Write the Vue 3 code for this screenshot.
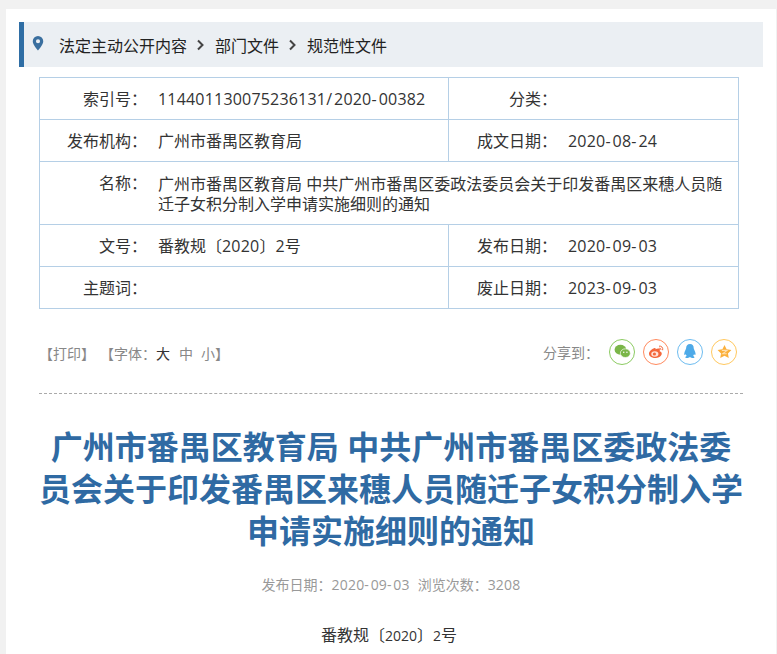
<script setup>
const C = '\uFF1A'
const rows = [
  { cells: [['索引号' + C, '114401130075236131/2020-00382'], ['分类' + C, '']] },
  { cells: [['发布机构' + C, '广州市番禺区教育局'], ['成文日期' + C, '2020-08-24']] },
  { wide: true, cells: [['名称' + C, '广州市番禺区教育局 中共广州市番禺区委政法委员会关于印发番禺区来穗人员随迁子女积分制入学申请实施细则的通知']] },
  { cells: [['文号' + C, '番教规〔2020〕2号'], ['发布日期' + C, '2020-09-03']] },
  { cells: [['主题词' + C, ''], ['废止日期' + C, '2023-09-03']] },
]

// Digits and separators are tracked separately so numbers take up the reference's width.
function parts(text) {
  return text.split(/(\d+|[-/])/).filter(Boolean).map((t) => ({
    t,
    cls: /^\d/.test(t) ? 'dg' : /^[-/]/.test(t) ? 'sep' : '',
  }))
}
</script>

<template>
  <div class="page">
    <div class="crumb">
      <svg class="pin" width="12" height="15" viewBox="0 0 12 16"><path fill="#3a6f9f" fill-rule="evenodd" d="M6 0a5.600 5.600 0 0 0-5.600 5.600C.4 9.400 6 15.500 6 15.500s5.600-6.100 5.600-9.900A5.600 5.600 0 0 0 6 0Zm0 7.800a2.200 2.200 0 1 1 0-4.400 2.200 2.200 0 0 1 0 4.400Z"/></svg>
      <span>法定主动公开内容</span>
      <svg class="chev" width="8" height="12" viewBox="0 0 8 12"><path d="M1 1.500 5.500 6 1 10.500" fill="none" stroke="#444" stroke-width="2"/></svg>
      <span>部门文件</span>
      <svg class="chev" width="8" height="12" viewBox="0 0 8 12"><path d="M1 1.500 5.500 6 1 10.500" fill="none" stroke="#444" stroke-width="2"/></svg>
      <span>规范性文件</span>
    </div>

    <div class="meta">
      <div v-for="(row, i) in rows" :key="i" class="row" :class="{ wide: row.wide }">
        <div v-for="(c, j) in row.cells" :key="j" class="cell" :class="j === 0 ? 'first' : 'second'">
          <div class="label">{{ c[0] }}</div>
          <div class="value"><span v-for="(p, k) in parts(c[1])" :key="k" :class="p.cls">{{ p.t }}</span></div>
        </div>
      </div>
    </div>

    <div class="tools">
      <div class="left">
        <span>【打印】</span>
        <span class="font">【字体{{ C }}<b>大</b><i>中</i><i>小</i>】</span>
      </div>
      <div class="share">
        <span class="share-label">分享到{{ C }}</span>
        <span class="ic wx">
          <svg width="17" height="15" viewBox="0 0 20 18"><ellipse cx="7.500" cy="6.800" rx="7" ry="6" fill="#7ab648"/><ellipse cx="13.400" cy="11" rx="6" ry="5.200" fill="#7ab648" stroke="#fff" stroke-width=".8"/><circle cx="11.500" cy="10" r=".9" fill="#fff"/><circle cx="15.300" cy="10" r=".9" fill="#fff"/></svg>
        </span>
        <span class="ic wb">
          <svg width="17" height="15" viewBox="0 0 20 18"><path fill="#f4673c" d="M8.500 4.500C4.500 5.500.8 9 1 12c.3 3.300 4.300 5 8.300 4.700 4-.3 7.200-2.700 7-5.400-.1-1.400-1.500-2.200-2.600-2.500.8-1.500.5-2.800-.6-3.300-1.200-.5-3 .1-4.300.9.300-1.300-.1-2.200-1.300-1.900Z"/><ellipse cx="8" cy="12" rx="4.300" ry="3.200" fill="#ffe3da"/><circle cx="7.500" cy="12" r="1.900" fill="#f4673c"/><path d="M13.500 2.500c2.500-.3 4.500 1.700 4 4.500M13.800 5c1-.1 1.700.7 1.500 1.700" fill="none" stroke="#f4673c" stroke-width="1.200" stroke-linecap="round"/></svg>
        </span>
        <span class="ic qq">
          <svg width="12" height="15" viewBox="0 0 12 15"><path fill="#4eaae8" d="M6 0C3.400 0 2.200 1.900 2.100 4.200 1.900 5.500.6 7.200.3 9.300c-.2 1.300.2 1.900.6 1.800.3-.1.600-.5.800-1 .2.700.6 1.300 1 1.800-.8.400-1.500.9-1.300 1.500.2.800 2 .8 3.100.4.400-.2.600-.3.800-.5h1.200c.2.200.4.300.8.500 1.100.4 2.900.4 3.100-.4.200-.6-.5-1.100-1.300-1.500.4-.5.800-1.100 1-1.800.2.500.5.900.8 1 .4.100.8-.5.600-1.800-.3-2.100-1.600-3.800-1.800-5.100C9.800 1.900 8.600 0 6 0Z"/></svg>
        </span>
        <span class="ic st">
          <svg width="15" height="15" viewBox="0 0 20 19"><path fill="#fbb03b" d="m10 .8 2.800 5.800 6.400.9-4.600 4.500 1.100 6.300L10 15.300l-5.700 3 1.100-6.300L.8 7.500l6.400-.9Z"/><path fill="none" stroke="#ffe0b0" stroke-width="1.400" d="M6.500 8h7l-6 4.500h5.500"/></svg>
        </span>
      </div>
    </div>

    <h1 class="title">广州市番禺区教育局 中共广州市番禺区委政法委员会关于印发番禺区来穗人员随迁子女积分制入学申请实施细则的通知</h1>
    <div class="info">
      <span>发布日期{{ C }}<span v-for="(p, k) in parts('2020-09-03')" :key="k" :class="p.cls">{{ p.t }}</span></span>
      <span>浏览次数{{ C }}<span class="dg">3208</span></span>
    </div>
    <p class="docno">番教规〔<span class="nar">2020</span>〕<span class="nar">2</span>号</p>
  </div>
</template>

<style>
html, body { margin: 0; background: #f1f1f1; overflow: hidden; }
</style>

<style scoped>
.page {
  box-sizing: border-box;
  width: 770px;
  height: 645px;
  margin: 9px 0 0 6px;
  padding: 13px 13px 0 13px;
  background: #fff;
  overflow: hidden;
  font-family: "Open Sans", "Noto Sans CJK SC", sans-serif;
  color: #333;
}
.dg { letter-spacing: .012em; }
.sep { letter-spacing: .13em; }
.crumb {
  display: flex;
  align-items: center;
  height: 45px;
  border-left: 5px solid #2f6ea5;
  background: #ebeff3;
  font-size: 16px;
  color: #222;
}
.pin { margin: 0 15px 0 8px; position: relative; top: -1px; }
.chev { margin: 0 10px; }
.meta {
  box-sizing: border-box;
  width: 700px;
  margin: 10px 0 0 20px;
  border: 1px solid #b5cfe6;
  border-bottom-width: 0;
  font-size: 16px;
  color: #333;
}
.row {
  display: flex;
  min-height: 41px;
  border-bottom: 1px solid #b5cfe6;
}
.row.wide { min-height: 62px; }
.cell { display: flex; align-items: center; box-sizing: border-box; padding-top: 1px; }
.first { width: 408px; }
.second { flex: 1; border-left: 1px solid #b5cfe6; }
.wide .first { width: 100%; align-items: flex-start; padding-top: 11px; }
.label { width: 107px; text-align: right; flex: none; line-height: 21px; }
.second .label { width: 108px; }
.value { margin-left: 11px; line-height: 21px; }
.wide .value { width: 570px; line-height: 20px; padding-top: 1px; }
.tools {
  display: flex;
  justify-content: space-between;
  align-items: center;
  margin-left: 20px;
  height: 85px;
  box-sizing: border-box;
  font-size: 14px;
  color: #888;
  border-bottom: 1px dashed #aaa;
  width: 704px;
  padding: 1px 6px 0 0;
}
.left { display: flex; gap: 5px; position: relative; top: 1px; }
.font b { font-weight: 400; color: #333; margin-right: 9px; }
.font i { font-style: normal; margin-right: 8px; }
.font i:last-of-type { margin-right: 0; }
.share { display: flex; align-items: center; }
.share-label { margin-right: 10px; }
.ic {
  box-sizing: border-box;
  display: flex;
  align-items: center;
  justify-content: center;
  width: 26px;
  height: 26px;
  border: 1px solid;
  border-radius: 50%;
  margin-right: 8px;
}
.ic:last-child { margin-right: 0; }
.wx { border-color: #8ccb62; }
.wb { border-color: #ff8a5e; }
.qq { border-color: #6dbcf0; }
.st { border-color: #ffc85e; }
.title {
  width: 704px;
  margin: 32px 0 0 20px;
  font-size: 32px;
  line-height: 42px;
  font-weight: 700;
  color: #2f6aa3;
  text-align: center;
}
.info {
  display: flex;
  justify-content: center;
  gap: 8px;
  width: 704px;
  margin: 23px 0 0 20px;
  font-size: 14px;
  line-height: 20px;
  color: #999;
}
.docno {
  box-sizing: border-box;
  width: 704px;
  margin: 28px 0 0 20px;
  padding-right: 4px;
  text-align: center;
  font-size: 16px;
  line-height: 24px;
  color: #333;
}
.nar { font-size: 14px; }
</style>
